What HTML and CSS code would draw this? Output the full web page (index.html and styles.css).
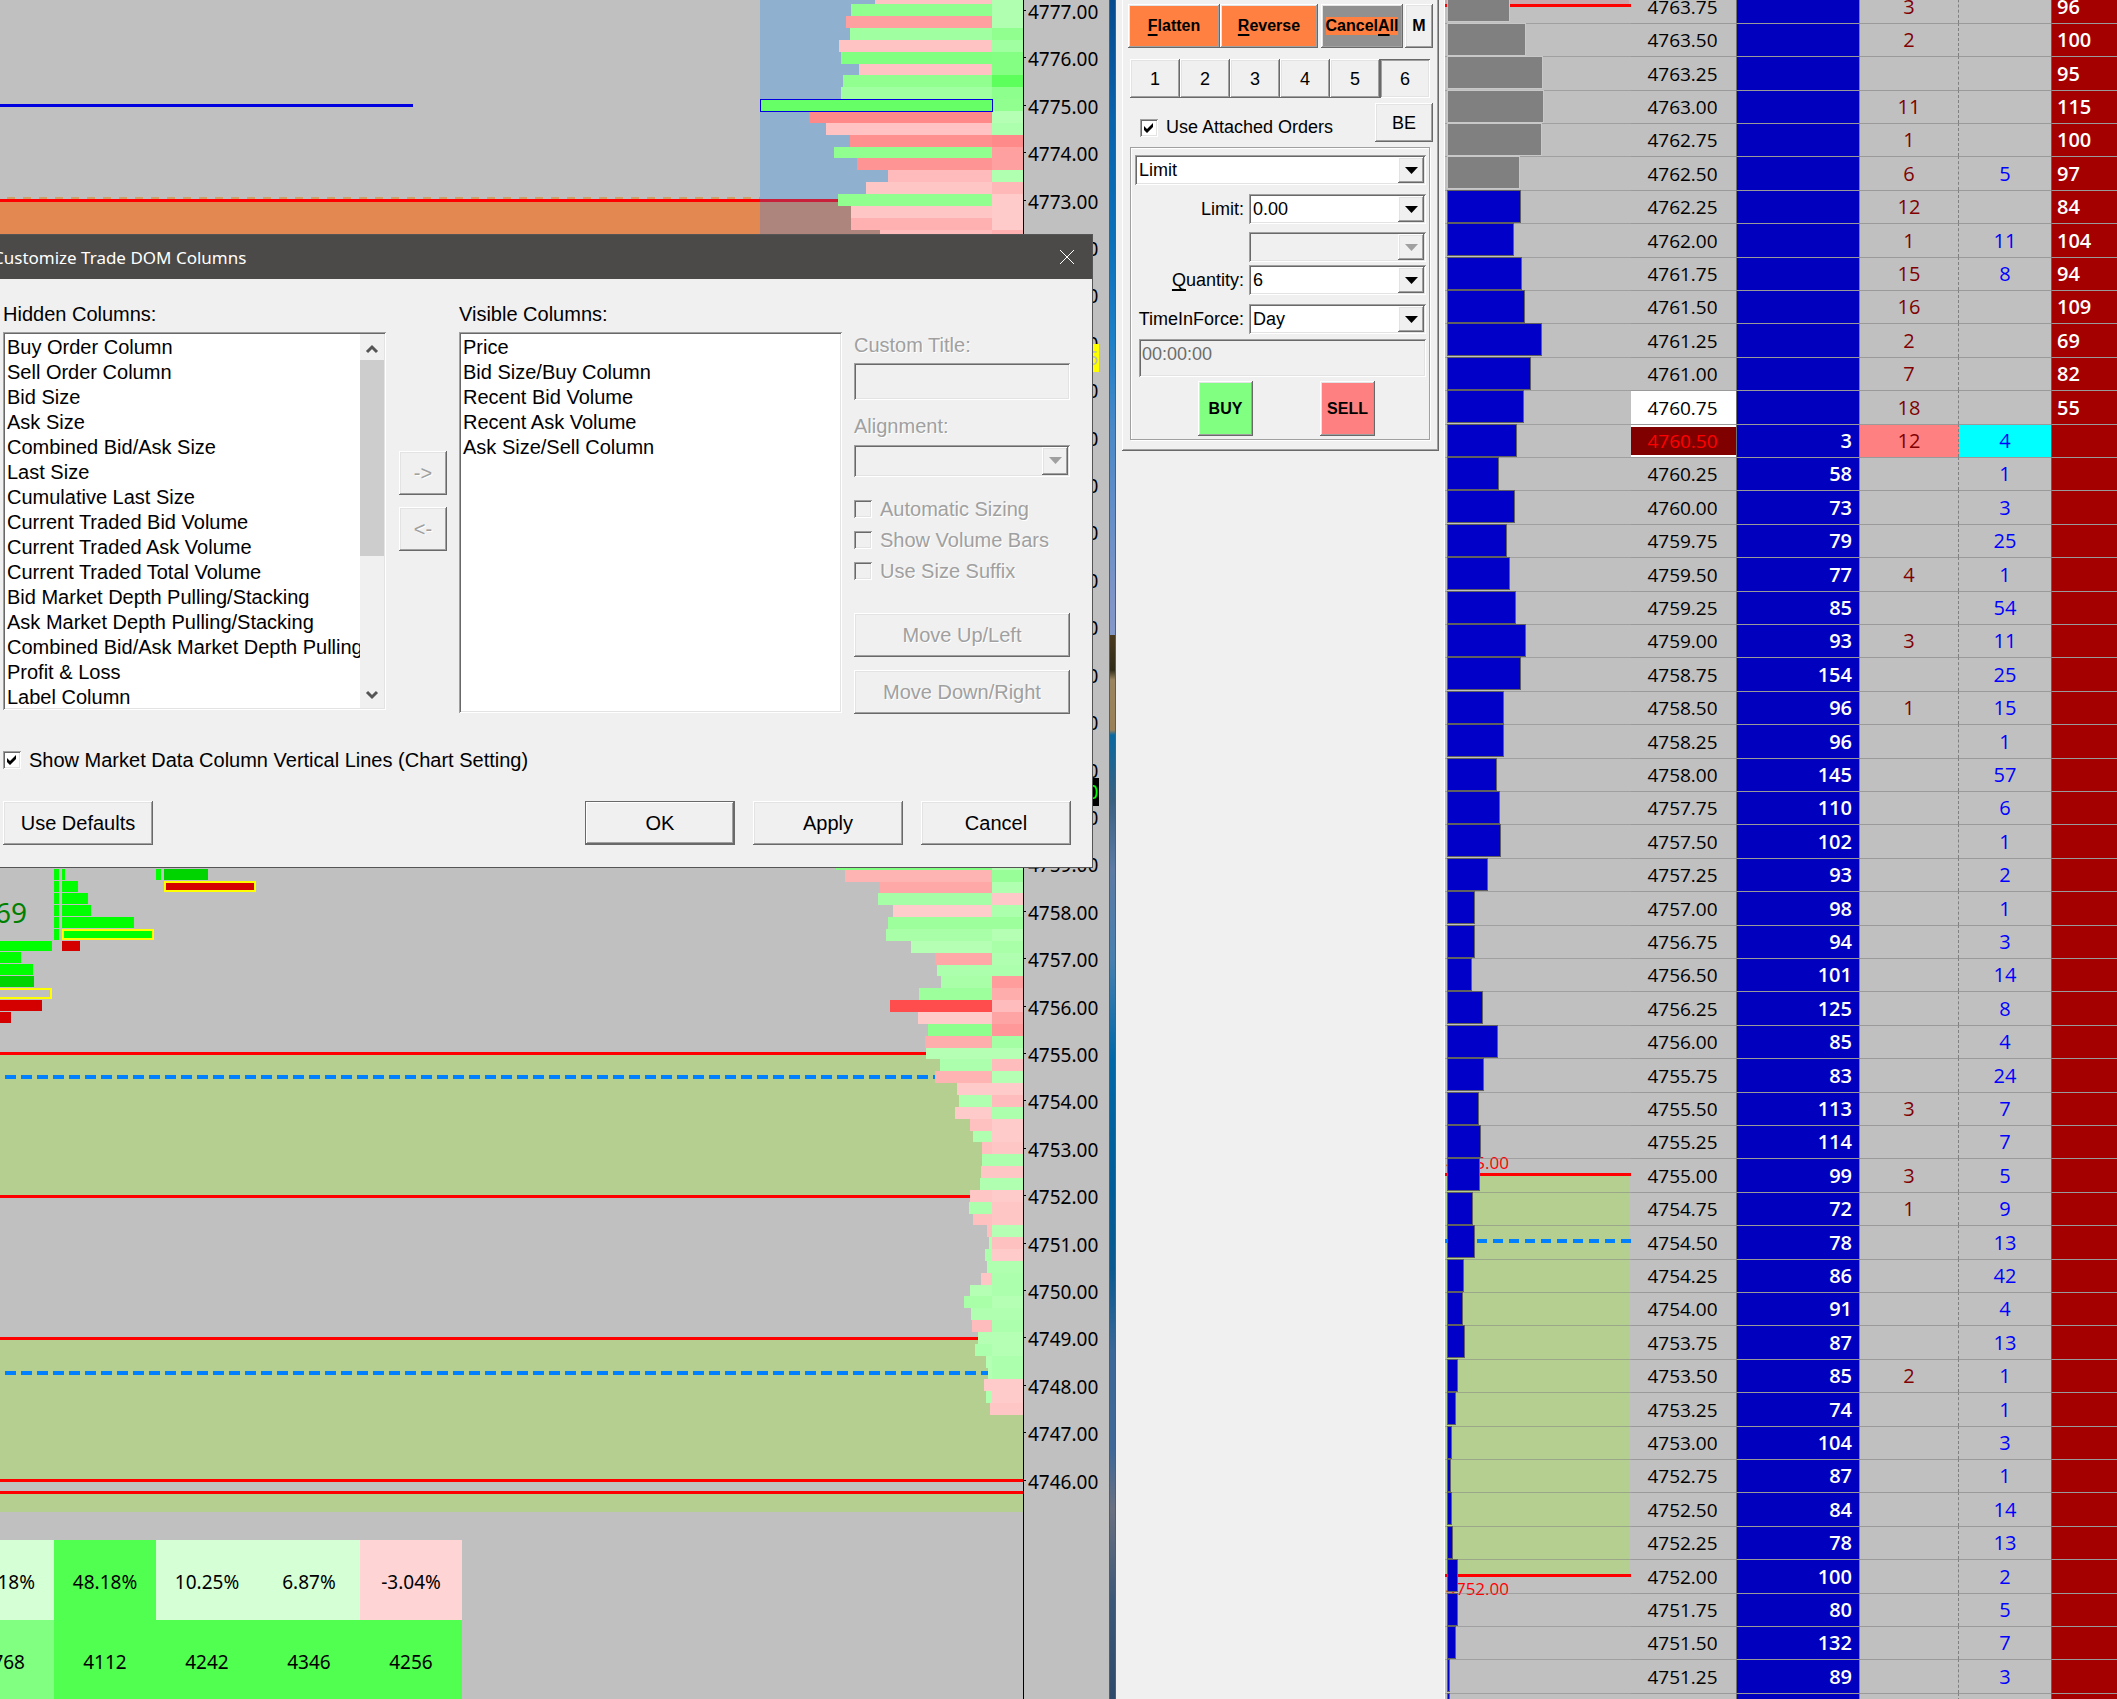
FILE: index.html
```html
<!DOCTYPE html>
<html lang="en">
<head>
<meta charset="utf-8">
<title>Trade DOM</title>
<link rel="stylesheet" href="styles.css">
</head>
<body>
<main class="workspace">
  <section class="chart" aria-label="Chart">
    <div class="plot">
      <div class="canvas">
        <svg class="layer" width="100%" height="1540" aria-hidden="true">
          <rect class="zone-orange" x="0" y="200" width="100%" height="100"/>
          <rect class="zone-green" x="0" y="1053" width="100%" height="143"/>
          <rect class="zone-green" x="0" y="1338" width="100%" height="142"/>
          <rect class="zone-green" x="0" y="1492" width="100%" height="20"/>
          <rect class="line-blue" x="0" y="104" width="413" height="3"/>
          <rect class="line-red" x="0" y="199" width="100%" height="3"/>
          <line class="dash-orange" x1="7" y1="198" x2="100%" y2="198"/>
          <rect class="line-red" x="0" y="1052" width="100%" height="3"/>
          <rect class="line-red" x="0" y="1195" width="100%" height="3"/>
          <rect class="line-red" x="0" y="1337" width="100%" height="3"/>
          <rect class="line-red" x="0" y="1479" width="100%" height="3"/>
          <rect class="line-red" x="0" y="1491" width="100%" height="3"/>
          <line class="dash-blue" x1="5" y1="1077" x2="100%" y2="1077"/>
          <line class="dash-blue" x1="5" y1="1373" x2="100%" y2="1373"/>
        </svg>
        <svg class="layer footprint" width="260" height="1540">
          <g class="up">
            <path d="M54 869h5v11h-5zM54 881h5v11h-5zM54 893h5v11h-5zM54 905h5v11h-5zM54 917h5v11h-5zM54 929h5v11h-5z"/>
            <path d="M62 869h3v11h-3zM62 881h16v11h-16zM62 893h26v11h-26zM62 905h29v11h-29zM62 917h72v11h-72zM62 929h92v11h-92z"/>
            <path d="M156 869h5v11h-5zM0 941h52v10h-52zM0 952h21v11h-21zM0 964h33v11h-33z"/>
          </g>
          <path class="up-dark" d="M164 869h44v11h-44zM0 976h34v11h-34z"/>
          <path class="down" d="M62 941h18v10h-18zM164 881h92v11h-92zM0 1000h42v11h-42zM0 1012h11v11h-11z"/>
          <path class="poc" d="M63 930h90v9h-90zM165 882h90v9h-90zM-4 989h55v9h-55z"/>
          <text class="delta" x="27" y="923" text-anchor="end">69</text>
        </svg>
        <svg class="layer profile" id="profile" width="264" height="1540" aria-hidden="true"></svg>
      </div>
      <table class="stats">
        <tr><td class="s1 cut">.18%</td><td class="s3">48.18%</td><td class="s1">10.25%</td><td class="s1">6.87%</td><td class="s0">-3.04%</td></tr>
        <tr><td class="s2 cut">3768</td><td class="s3">4112</td><td class="s3">4242</td><td class="s3">4346</td><td class="s3">4256</td></tr>
      </table>
    </div>
    <div class="axis">
      <ol class="ticks" id="ticks"></ol>
      <span class="tag tag-high">4769.75</span>
      <span class="tag tag-last">4760.50</span>
    </div>

    <form class="dialog" role="dialog" aria-labelledby="dialog-title">
      <header class="titlebar">
        <h1 id="dialog-title">Customize Trade DOM Columns</h1>
        <button type="button" class="close" aria-label="Close">
          <svg width="16" height="16" viewBox="0 0 16 16"><path d="M1 1L15 15M15 1L1 15"/></svg>
        </button>
      </header>
      <div class="columns">
        <div class="field field-hidden">
          <label for="hidden-cols">Hidden Columns:</label>
          <div class="listbox listbox-hidden">
            <select id="hidden-cols" size="15">
              <option>Buy Order Column</option><option>Sell Order Column</option><option>Bid Size</option><option>Ask Size</option><option>Combined Bid/Ask Size</option><option>Last Size</option><option>Cumulative Last Size</option><option>Current Traded Bid Volume</option><option>Current Traded Ask Volume</option><option>Current Traded Total Volume</option><option>Bid Market Depth Pulling/Stacking</option><option>Ask Market Depth Pulling/Stacking</option><option>Combined Bid/Ask Market Depth Pulling/Stacking</option><option>Profit &amp; Loss</option><option>Label Column</option>
            </select>
            <div class="scrollbar" aria-hidden="true">
              <svg width="24" height="26" viewBox="0 0 24 26"><path d="M7 18L12 13L17 18"/></svg>
              <i class="thumb"></i>
              <svg width="24" height="26" viewBox="0 0 24 26"><path d="M7 10L12 15L17 10"/></svg>
            </div>
          </div>
        </div>
        <div class="movers">
          <button type="button" disabled>-&gt;</button>
          <button type="button" disabled>&lt;-</button>
        </div>
        <div class="field">
          <label for="visible-cols">Visible Columns:</label>
          <div class="listbox listbox-visible">
            <select id="visible-cols" size="15">
              <option>Price</option><option>Bid Size/Buy Column</option><option>Recent Bid Volume</option><option>Recent Ask Volume</option><option>Ask Size/Sell Column</option>
            </select>
          </div>
        </div>
        <div class="options">
          <label class="off" for="custom-title">Custom Title:</label>
          <input class="sunken title-input" id="custom-title" type="text" disabled>
          <label class="off" for="alignment">Alignment:</label>
          <span class="combo off align-combo"><select id="alignment" disabled><option></option></select></span>
          <div class="checks">
            <label class="check off"><input type="checkbox" disabled>Automatic Sizing</label>
            <label class="check off"><input type="checkbox" disabled>Show Volume Bars</label>
            <label class="check off"><input type="checkbox" disabled>Use Size Suffix</label>
          </div>
          <div class="stack">
            <button type="button" disabled>Move Up/Left</button>
            <button type="button" disabled>Move Down/Right</button>
          </div>
        </div>
      </div>
      <label class="check lines-check"><input type="checkbox" checked>Show Market Data Column Vertical Lines (Chart Setting)</label>
      <footer class="actions">
        <button type="button">Use Defaults</button>
        <button type="submit" class="primary">OK</button>
        <button type="button">Apply</button>
        <button type="button">Cancel</button>
      </footer>
    </form>
  </section>

  <div class="desktop" aria-hidden="true"></div>

  <section class="ticket" aria-label="Trade window">
    <form class="ticket-box">
      <div class="row top-row">
        <button type="button" class="orange flatten"><u>F</u>latten</button>
        <button type="button" class="orange reverse"><u>R</u>everse</button>
        <button type="button" class="cancel-all"><span>Cancel<u>A</u>ll</span></button>
        <button type="button" class="m">M</button>
      </div>
      <div class="row presets">
        <button type="button">1</button><button type="button">2</button><button type="button">3</button><button type="button">4</button><button type="button">5</button><button type="button" class="pressed">6</button>
      </div>
      <div class="row attach">
        <label class="check"><input type="checkbox" checked>Use Attached Orders</label>
        <button type="button" class="be">BE</button>
      </div>
      <div class="order">
        <span class="combo type"><select aria-label="Order type"><option>Limit</option></select></span>
        <div class="pair limit-pair"><label for="limit">Limit:</label><span class="combo"><select id="limit"><option>0.00</option></select></span></div>
        <div class="pair"><span></span><span class="combo off"><select aria-label="Second price" disabled><option></option></select></span></div>
        <div class="pair qty-pair"><label for="qty"><u>Q</u>uantity:</label><span class="combo"><select id="qty"><option>6</option></select></span></div>
        <div class="pair tif-pair"><label for="tif">TimeInForce:</label><span class="combo"><select id="tif"><option>Day</option></select></span></div>
        <input class="sunken time" type="text" aria-label="Time" value="00:00:00" disabled>
        <div class="sides">
          <button type="button" class="buy">BUY</button>
          <button type="button" class="sell">SELL</button>
        </div>
      </div>
    </form>
  </section>

  <section class="dom" aria-label="Trade DOM">
    <svg class="dom-chart" width="186" height="1700">
      <rect class="zone-green" x="0" y="1175" width="184" height="400"/>
      <rect class="zone-pink" x="0" y="0" width="184" height="5"/>
      <rect class="line-red" x="0" y="4" width="186" height="3"/>
      <rect class="line-red" x="0" y="1173" width="186" height="3"/>
      <rect class="line-red" x="0" y="1574" width="186" height="3"/>
      <line class="dash-blue" x1="0" y1="1241" x2="186" y2="1241"/>
      <text class="level" x="64" y="1169" text-anchor="end">4755.00</text>
      <text class="level" x="64" y="1595" text-anchor="end">4752.00</text>
    </svg>
    <table class="ladder"><tbody id="ladder"></tbody></table>
  </section>
</main>
<script src="app.js"></script>
</body>
</html>
```
FILE: styles.css
```css
* { box-sizing: border-box; }

body {
  margin: 0;
  background: #f0f0f0;
  color: #000;
  font-family: "Liberation Sans", Arial, sans-serif;
  font-size: 20px;
  overflow: hidden;
}

.workspace {
  display: grid;
  grid-template-columns: 1fr 7px 329px 672px;
  height: 100vh;
  overflow: hidden;
}

/* Shared Win32-style controls */
button {
  padding: 0;
  border: 0;
  background: #f0f0f0;
  color: #000;
  font: inherit;
  box-shadow: inset -1px -1px #696969, inset 1px 1px #fff, inset -2px -2px #a0a0a0, inset 2px 2px #e3e3e3;
}
button:disabled, label.off, .check.off { color: #a0a0a0; text-shadow: 1px 1px #fff; }
u { text-underline-offset: 3px; text-decoration-thickness: 2px; text-decoration-skip-ink: none; }

.sunken, .listbox, .combo, .check input {
  border: 0;
  background: #fff;
  box-shadow: inset 1px 1px #a0a0a0, inset -1px -1px #fff, inset 2px 2px #696969, inset -2px -2px #e3e3e3;
}
.sunken:disabled, .combo.off, .check input:disabled { background: #f0f0f0; }
.sunken { display: block; font: inherit; }

.combo { position: relative; display: block; height: 30px; }
.combo select {
  width: 100%;
  height: 30px;
  padding: 0 30px 0 4px;
  border: 0;
  background: none;
  appearance: none;
  color: #000;
  font: inherit;
  opacity: 1;
}
.combo::before {
  content: "";
  position: absolute;
  top: 2px; right: 2px; bottom: 2px;
  width: 26px;
  background: #f0f0f0;
  box-shadow: inset -1px -1px #696969, inset 1px 1px #fff, inset -2px -2px #a0a0a0, inset 2px 2px #e3e3e3;
  pointer-events: none;
}
.combo::after {
  content: "";
  position: absolute;
  top: 12px; right: 8px;
  width: 13px;
  height: 7px;
  background: #000;
  clip-path: polygon(0 0, 100% 0, 50% 100%);
  pointer-events: none;
}
.combo.off::after { background: #a0a0a0; }

.check { display: flex; align-items: center; gap: 8px; }
.check input {
  flex: none;
  appearance: none;
  width: 18px;
  height: 18px;
  margin: 0;
}
.check input:checked {
  background: #fff url("data:image/svg+xml,%3Csvg xmlns='http://www.w3.org/2000/svg' width='18' height='18'%3E%3Cpath d='M4 7v4l3 3l6-6v-4l-6 6z'/%3E%3C/svg%3E") no-repeat;
}

/* Chart */
.chart {
  position: relative;
  display: grid;
  grid-template-columns: 1fr 86px;
  background: #c0c0c0;
  min-width: 0;
  overflow: hidden;
  font-family: "Noto Sans", "Open Sans", sans-serif;
  font-size: 19px;
}
.plot { min-width: 0; }
.canvas { position: relative; height: 1540px; }
.layer { position: absolute; top: 0; left: 0; }
.profile { left: auto; right: 0; }
.zone-orange { fill: #e28850; }
.zone-green { fill: #b5cf91; }
.zone-pink { fill: #c8a8ac; }
.line-blue { fill: #0000e0; }
.line-red { fill: #f00; }
.dash-orange { stroke: #e08010; stroke-width: 1; stroke-dasharray: 8 8; }
.dash-blue { stroke: #0080ff; stroke-width: 4; stroke-dasharray: 11 5; }
.dom-chart .dash-blue { stroke-dasharray: 10 6; }
.up { fill: #0f0; }
.up-dark { fill: #00d400; }
.down { fill: #d40000; }
.poc { fill: none; stroke: #ff0; stroke-width: 2; }
.delta { fill: #008000; font-size: 28px; }

.stats { border-spacing: 0; table-layout: fixed; width: 510px; margin-left: -48px; }
.stats td { width: 102px; height: 80px; padding: 4px 0 0; text-align: center; }
.stats td.cut { padding-right: 19px; text-align: right; }
.stats tr + tr td.cut { padding-right: 29px; }
.s0 { background: #ffd4d4; }
.s1 { background: #d5ffd5; }
.s2 { background: #80ff80; }
.s3 { background: #50ff50; }

.axis { position: relative; border-left: 1px solid #000; overflow: hidden; }
.ticks {
  display: flex;
  flex-direction: column;
  height: 1517px;
  margin: -13px 0 0;
  padding: 0;
  list-style: none;
}
.ticks li { position: relative; flex: 1; padding: 12px 0 0 4px; line-height: 27px; }
.ticks li::before { content: ""; position: absolute; left: 0; top: 23px; width: 2px; height: 1px; background: #000; }
.tag { position: absolute; left: 0; width: 75px; height: 28px; padding-left: 4px; line-height: 28px; }
.tag-high { top: 344px; background: #ff0; color: #c0c0c0; }
.tag-last { top: 778px; background: #000; color: #0f0; }

/* Column dialog */
.dialog {
  position: absolute;
  top: 234px;
  left: 0;
  right: 16px;
  height: 634px;
  border: solid #555;
  border-width: 1px 1px 1px 0;
  background: #f0f0f0;
  font-family: "Liberation Sans", Arial, sans-serif;
  font-size: 20px;
  line-height: 24px;
}
.titlebar {
  display: flex;
  align-items: center;
  justify-content: space-between;
  height: 44px;
  padding-right: 17px;
  background: #4c4a48;
}
.titlebar h1 {
  margin: 0 0 0 -7px;
  color: #fff;
  font: 17px "Noto Sans", "Open Sans", sans-serif;
}
.close { display: flex; background: none; box-shadow: none; }
.close path { fill: none; stroke: #fff; stroke-width: 1; }

.columns {
  display: grid;
  grid-template-columns: 396px 48px 383px 216px;
  column-gap: 12px;
  height: 436px;
  padding: 23px 0 0 3px;
}
.columns .movers { margin-left: 0; }
.field-hidden { width: 383px; }
.field label { display: block; height: 30px; }
.listbox { display: flex; padding: 2px; }
.listbox-hidden { height: 378px; }
.listbox-visible { height: 381px; }
.listbox select {
  flex: 1;
  min-width: 0;
  height: 100%;
  padding: 0;
  border: 0;
  outline: 0;
  background: #fff;
  font: inherit;
  color: #000;
  overflow: hidden;
  scrollbar-width: none;
}
.listbox option { height: 25px; min-height: 25px; padding: 2px 0 0 2px; line-height: 23px; }
.scrollbar { display: flex; flex-direction: column; width: 24px; background: #f0f0f0; }
.scrollbar svg:last-child { margin-top: auto; }
.scrollbar path { fill: none; stroke: #555; stroke-width: 3; }
.thumb { height: 196px; background: #cdcdcd; }
.columns { grid-template-columns: 384px 48px 383px 216px; }
.movers { display: flex; flex-direction: column; gap: 12px; padding-top: 149px; }
.movers button { height: 44px; }
.options { padding-top: 31px; }
.options > label { display: block; }
.title-input { width: 100%; height: 37px; margin: 6px 0 14px; }
.align-combo { height: 32px; margin: 7px 0 20px; }
.checks { display: flex; flex-direction: column; gap: 7px; }
.stack { display: flex; flex-direction: column; gap: 13px; margin-top: 30px; }
.stack button { height: 44px; }
.lines-check { height: 24px; margin: 33px 0 29px 3px; }
.actions {
  display: flex;
  gap: 18px;
  padding: 0 21px 0 3px;
}
.actions button { width: 150px; height: 44px; }
.actions button:first-child { margin-right: auto; }
.actions .primary {
  box-shadow: inset 0 0 0 1px #696969, inset -2px -2px #696969, inset 2px 2px #fff, inset -3px -3px #a0a0a0;
}

/* Strip of wallpaper between the windows */
.desktop {
  border: solid #4a6078;
  border-width: 0 1px;
  background: linear-gradient(#064a8e 0, #0862ac 120px, #0a70ba 240px, #1c80c8 340px, #4a88c8 430px, #7f95c8 600px, #8498c8 635px,
    #4a3a20 635px, #302c18 670px, #9a8560 680px, #9a8058 730px, #0a68a0 735px, #3a6080 800px, #5d7ba5 870px, #4880b0 960px,
    #0068a8 1060px, #005c98 1190px, #0a5a90 1270px, #3a6898 1350px, #3f6898 1450px, #6a7080 1510px, #3c5878 1600px, #2e4a6a 1700px);
}

/* Order ticket */
.ticket { border-right: 1px solid #fff; font-size: 18px; }
.ticket-box {
  width: 317px;
  height: 451px;
  margin-left: 6px;
  padding: 4px 6px 0;
  box-shadow: inset -1px -1px #696969, inset 1px 0 #fff, inset -2px -2px #a0a0a0;
}
.row { display: flex; }
.top-row { font-size: 16px; font-weight: bold; }
.top-row button { height: 44px; font: inherit; }
.top-row .orange { background: #ff8040; }
.flatten { width: 92px; }
.reverse { width: 98px; margin-right: 3px; }
.top-row .cancel-all { width: 82px; margin-right: 2px; background: #909090; }
.cancel-all span { display: inline-block; background: #ff8040; }
.m { width: 28px; }
.presets { margin: 11px 3px 5px 2px; }
.presets button { flex: 1; height: 39px; padding-top: 2px; }
.presets .pressed { box-shadow: inset 1px 1px #696969, inset -1px -1px #fff, inset 2px 2px #a0a0a0, inset -2px -2px #e3e3e3; }
.attach { justify-content: space-between; padding-left: 12px; }
.attach .check { padding-top: 10px; }
.be { width: 58px; height: 39px; padding-top: 2px; }
.order {
  height: 293px;
  margin: 5px 3px 0 2px;
  padding: 7px 3px 0 4px;
  border: 1px solid #a0a0a0;
  box-shadow: 1px 1px #fff, inset 1px 1px #fff;
}
.pair { display: grid; grid-template-columns: 1fr 177px; gap: 5px; align-items: center; margin-top: 8px; }
.pair label { text-align: right; }
.pair.limit-pair { margin-top: 9px; }
.pair.qty-pair { margin-top: 3px; }
.pair.tif-pair { margin-top: 9px; }
.time { width: 287px; height: 38px; margin: 5px 0 4px auto; padding: 0 3px 8px; color: #6d6d6d; }
.sides { display: flex; justify-content: space-between; padding: 0 51px 0 63px; }
.sides button { width: 55px; height: 55px; font-size: 16px; font-weight: bold; }
.sides .buy { background: #80ff80; }
.sides .sell { background: #ff8080; }

/* DOM ladder */
.dom {
  position: relative;
  background: #c0c0c0;
  overflow: hidden;
  font-family: "Open Sans", "Noto Sans", sans-serif;
  font-size: 20px;
}
.dom-chart { position: absolute; top: 0; left: 0; }
.level { fill: #f00; font-size: 17px; }
.ladder {
  position: relative;
  width: 100%;
  margin-top: -11px;
  table-layout: fixed;
  border-spacing: 0;
}
.ladder tr { height: 33px; }
.ladder tr:nth-child(5n+1), .ladder tr:nth-child(5n+3) { height: 34px; }
.ladder td {
  padding: 0;
  border-top: 1px solid #9a9a9a;
  line-height: 26px;
  text-align: center;
}
.ladder .hist { width: 186px; padding: 0 0 0 2px; border-top-color: rgb(128 128 128 / 50%); vertical-align: top; }
.bar { display: block; height: 33px; margin: -1px 0 -1px; background: #0000c8; border: 1px solid #606060; }
.bar.ask { background: #808080; border-color: #c8c8c8; }
.ladder .price { width: 106px; padding-right: 2px; border-right: 1px solid #707070; font-size: 19px; }
.ladder .bid { width: 123px; padding-right: 7px; background: #0000be; border-right: 1px solid #808080; color: #fff; font-weight: 600; text-align: right; }
.ladder .rbid { width: 99px; border-right: 1px dashed #808080; color: #800000; font-weight: 500; }
.ladder .rask { width: 93px; border-right: 1px solid #606060; color: #00f; font-weight: 500; }
.ladder .ask-size { padding-left: 5px; background: #a40000; color: #fff; font-weight: 600; text-align: left; }
.ladder .bid-best { background: #fff; }
.ladder .last {
  background: #800000;
  color: #f00;
  box-shadow: inset 0 2px #fff, inset 0 -2px #fff;
}
.ladder .hit { background: #ff8080; }
.ladder .lift { background: #0ff; }
```
FILE: app.js
```js
// Volume profile: price of the first row, then [left edge, fill, session fill] per quarter point.
const TOP = 4777, TOP_Y = 10.3, POINT = 47.42, OFFSET = 759;
const y = price => TOP_Y + (TOP - price) * POINT;

const upper = [
  [875,'ffc3c3','b0ffb0'],[851,'90ff90','b0ffb0'],[846,'ffa0a0','b0ffb0'],[850,'a0ffa0','90ff90'],
  [839,'ffc3c3','a0ffa0'],[841,'80ff80','84ff84'],[859,'ffc3c3','84ff84'],[843,'90ff90','5cff5c'],
  [841,'a0ffa0','8cff8c'],[760,'66ff66','90ff90'],[809,'ff8888','b4ffb4'],[826,'ffc3c3','acffac'],
  [850,'ff9090','ff8a8a'],[834,'90ff90','ffa0a0'],[857,'ff9494','ffa0a0'],[888,'ffbbbb','b0ffb0'],
  [866,'ffc6c6','ffb8b8'],[838,'90ff90','ffcaca'],[851,'ffc6c6','ffcaca'],[851,'ffb0b0','ffcaca'],
  [880,'ffbbbb','ffb0b0']
];
const lower = [
  [836,'80ff80','b0ffb0'],[845,'ffb4b4','98ff98'],[880,'ffa8a8','b0ffb0'],[878,'a6ffa6','ffc8c8'],
  [893,'ffcccc','acffac'],[888,'9cff9c','9cff9c'],[886,'a8ffa8','b4ffb4'],[911,'b4ffb4','a8ffa8'],
  [935,'ffa8a8','b0ffb0'],[937,'acffac','acffac'],[941,'a8ffa8','ff9c9c'],[919,'9cff9c','ffacac'],
  [890,'ff4c4c','ffbcbc'],[918,'ffcaca','ffa4a4'],[928,'8cff8c','ff9898'],[925,'ffacac','a4ffa4'],
  [926,'b4ffb4','b4ffb4'],[940,'acffac','ffbcbc'],[935,'ffb4b4','b4ffb4'],[957,'ffcaca','ffcaca'],
  [959,'b0ffb0','ffbcbc'],[955,'ffcaca','acffac'],[970,'ffc0c0','ffcaca'],[973,'b0ffb0','ffcaca'],
  [982,'ffc0c0','ffc6c6'],[982,'acffac','acffac'],[981,'ffc6c6','ffc6c6'],[980,'b0ffb0','b0ffb0'],
  [970,'ffc6c6','ffcaca'],[969,'acffac','ffc6c6'],[973,'ffc0c0','ffc6c6'],[987,'ffc0c0','b4ffb4'],
  [989,'b0ffb0','ffc0c0'],[985,'acffac','ffcaca'],[987,'b0ffb0','b0ffb0'],[981,'ffc6c6','acffac'],
  [970,'b4ffb4','acffac'],[964,'a8ffa8','b4ffb4'],[971,'b0ffb0','b0ffb0'],[972,'ffbcbc','acffac'],
  [978,'b4ffb4','b4ffb4'],[975,'acffac','b4ffb4'],[986,'b4ffb4','acffac'],[988,'b4ffb4','acffac'],
  [984,'ffcaca','ffcaca'],[986,'b0ffb0','ffcaca'],[990,'ffc6c6','ffc6c6']
];

const rect = (x, top, w, h, extra) => `<rect x="${x}" y="${top}" width="${w}" height="${h}" ${extra}/>`;
const rows = (start, list) => list.map(([left, fill, session], i) => {
  const top = Math.round(y(start - i / 4) - 6), next = Math.round(y(start - (i + 1) / 4) - 6);
  return rect(left - OFFSET, top, 992 - left, next - top, `fill="#${fill}"`) +
    rect(992 - OFFSET, top, 31, next - top, `fill="#${session}"`);
}).join('');

document.getElementById('profile').innerHTML =
  rect(1, 0, 232, 199, 'fill="#90b0d0"') + rect(1, 199, 232, 3, 'fill="#c81f3a"') +
  rect(1, 202, 232, 60, 'fill="#ad857c"') + rows(4777.25, upper) + rows(4759, lower) +
  '<rect x="1.5" y="99.5" width="232" height="12" fill="none" stroke="#0000e0"/>';

document.getElementById('ticks').innerHTML =
  Array.from({ length: 32 }, (_, i) => `<li>${(TOP - i).toFixed(2)}</li>`).join('');

// Ladder data, one entry per tick from 4763.75 down.
const bars = [62,78,95,96,94,72,73,66,74,77,94,83,76,69,51,67,59,62,68,78,73,56,56,49,52,53,40,27,27,24,35,50,36,31,33,
  32,25,27,16,15,17,10,8,4,3,4,5,10,10,8,2,2];
const asks = [96,100,95,115,100,97,84,104,94,109,69,82,55];
const bids = [3,58,73,79,77,85,93,154,96,96,145,110,102,93,98,94,101,125,85,83,113,114,99,72,78,86,91,87,85,74,104,87,
  84,78,100,80,132,89];
const recentBid = [3,2,'',11,1,6,12,1,15,16,2,7,18,12,'','','',4,'',3,'',1,'','','','','','','','','','','',3,'',3,1,
  '','','','',2];
const recentAsk = ['','','','','',5,'',11,8,'','','','',4,1,3,25,1,54,11,25,15,1,57,6,1,2,1,3,14,8,4,24,7,7,5,9,13,42,
  4,13,1,1,3,1,14,13,2,5,7,3];
const LAST = 13;

document.getElementById('ladder').innerHTML = bars.map((w, i) => {
  const price = i < 51 ? (4763.75 - i / 4).toFixed(2) : '';
  const mark = i === LAST ? ' last' : i === LAST - 1 ? ' bid-best' : '';
  return `<tr><td class="hist"><span class="bar${i < 6 ? ' ask' : ''}" style="width:${w + 1}px"></span></td>` +
    `<td class="price${mark}">${price}</td>` +
    `<td class="bid">${bids[i - LAST] ?? ''}</td>` +
    `<td class="rbid${i === LAST ? ' hit' : ''}">${recentBid[i] ?? ''}</td>` +
    `<td class="rask${i === LAST ? ' lift' : ''}">${recentAsk[i] ?? ''}</td>` +
    `<td class="ask-size">${asks[i] ?? ''}</td></tr>`;
}).join('');
```
